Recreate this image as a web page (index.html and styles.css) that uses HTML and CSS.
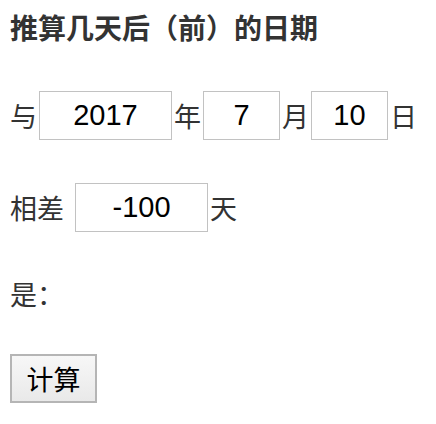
FILE: index.html
```html
<!DOCTYPE html>
<html lang="zh-CN">
<head>
<meta charset="utf-8">
<title>推算几天后（前）的日期</title>
<link rel="stylesheet" href="styles.css">
</head>
<body>
<h3 class="title">推算几天后（前）的日期</h3>
<div class="row row-date">
  <span class="label">与</span>
  <input class="field field-year" type="text" value="2017">
  <span class="label">年</span>
  <input class="field field-small" type="text" value="7">
  <span class="label">月</span>
  <input class="field field-small" type="text" value="10">
  <span class="label">日</span>
</div>
<div class="row row-diff">
  <span class="label">相差</span>
  <input class="field field-year field-gap" type="text" value="-100">
  <span class="label">天</span>
</div>
<div class="result">是：</div>
<button class="btn" type="button">计算</button>
</body>
</html>
```

FILE: styles.css
```css
html, body {
  background: #ffffff;
}
body {
  margin: 0;
  padding: 0 10px;
  font-family: "Noto Sans CJK SC", "Noto Sans", sans-serif;
  font-size: 27px;
  color: #333333;
}
.title {
  margin: 12px 0 0;
  font-size: 28px;
  font-weight: 700;
  line-height: 31px;
  height: 31px;
}
.row {
  display: flex;
  align-items: center;
  height: 49px;
}
.row-date {
  margin-top: 48px;
}
.row-diff {
  margin-top: 43px;
}
.label {
  line-height: 30px;
}
.field {
  box-sizing: border-box;
  height: 49px;
  margin: 0 2px;
  padding: 0;
  border: 1px solid #c2c2c2;
  border-radius: 0;
  background: #ffffff;
  color: #000000;
  font-family: "Liberation Sans", Arial, sans-serif;
  font-size: 29px;
  text-align: center;
  outline: none;
}
.field-year {
  width: 133px;
}
.field-small {
  width: 77px;
}
.field-gap {
  margin-left: 11px;
}
.result {
  margin-top: 47px;
  line-height: 30px;
  height: 30px;
}
.btn {
  display: block;
  box-sizing: border-box;
  margin-top: 45px;
  width: 87px;
  height: 49px;
  padding: 0;
  border: 2px solid #b5b5b5;
  border-radius: 0;
  background: linear-gradient(#f7f7f7, #e9e9e9);
  color: #000000;
  font-family: "Noto Sans CJK SC", sans-serif;
  font-size: 27px;
  line-height: 30px;
}
```
